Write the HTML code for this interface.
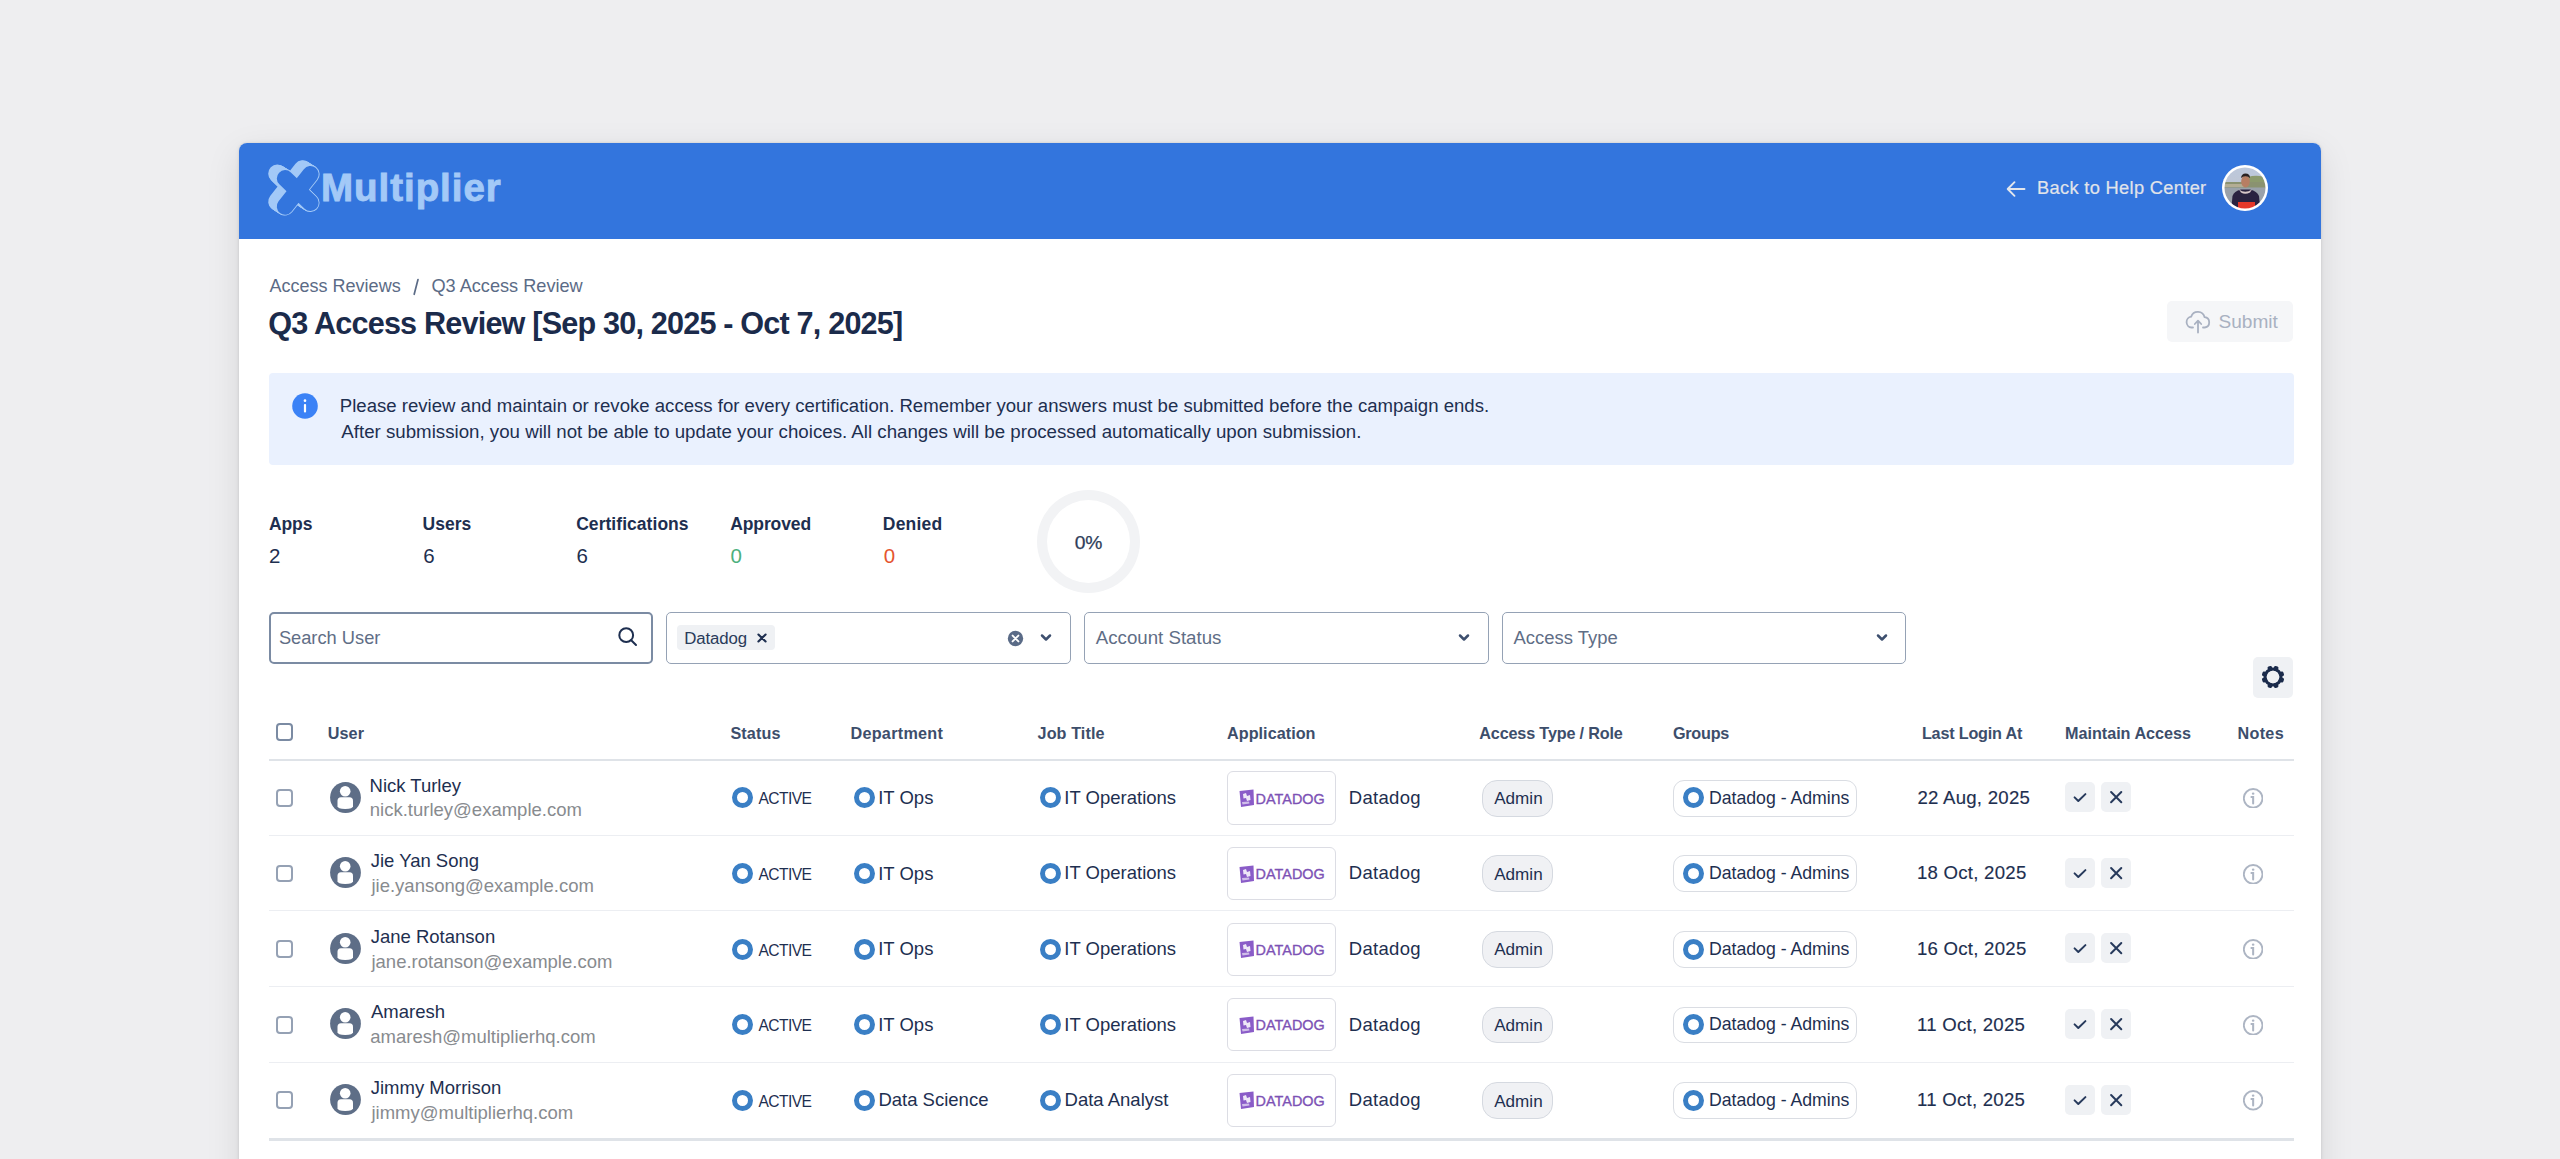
<!DOCTYPE html>
<html><head><meta charset="utf-8"><style>
html,body{margin:0;padding:0;}
body{width:2560px;height:1159px;overflow:hidden;background:#eeeef0;position:relative;font-family:"Liberation Sans",sans-serif;}
.t{position:absolute;white-space:nowrap;line-height:1;}
.r{position:absolute;}
</style></head><body>
<div class="r" style="left:239.00px;top:143.00px;width:2082.00px;height:1257.00px;background:#fff;border-radius:8px;box-shadow:0 0 2px rgba(0,0,0,0.10),0 0 5px rgba(0,0,0,0.06),0 10px 34px rgba(0,0,0,0.10);"></div>
<div class="r" style="left:239.00px;top:143.00px;width:2082.00px;height:96.00px;background:#3375dd;border-radius:8px 8px 0 0;"></div>
<svg class="r" style="left:262.00px;top:155.00px;width:64.00px;height:64.00px;" viewBox="0 0 64 64"><g transform="translate(-7.70,-4.80)"><path d="M23.1 23.4 L48.4 47.8 M48.4 19.3 L23.1 51.4" stroke="#a3c9f7" stroke-width="18.4" stroke-linecap="round" fill="none"/></g><g transform="translate(-6.93,-4.32)"><path d="M23.1 23.4 L48.4 47.8 M48.4 19.3 L23.1 51.4" stroke="#a3c9f7" stroke-width="18.4" stroke-linecap="round" fill="none"/></g><g transform="translate(-6.16,-3.84)"><path d="M23.1 23.4 L48.4 47.8 M48.4 19.3 L23.1 51.4" stroke="#a3c9f7" stroke-width="18.4" stroke-linecap="round" fill="none"/></g><g transform="translate(-5.39,-3.36)"><path d="M23.1 23.4 L48.4 47.8 M48.4 19.3 L23.1 51.4" stroke="#a3c9f7" stroke-width="18.4" stroke-linecap="round" fill="none"/></g><g transform="translate(-4.62,-2.88)"><path d="M23.1 23.4 L48.4 47.8 M48.4 19.3 L23.1 51.4" stroke="#a3c9f7" stroke-width="18.4" stroke-linecap="round" fill="none"/></g><g transform="translate(-3.85,-2.40)"><path d="M23.1 23.4 L48.4 47.8 M48.4 19.3 L23.1 51.4" stroke="#a3c9f7" stroke-width="18.4" stroke-linecap="round" fill="none"/></g><g transform="translate(-3.08,-1.92)"><path d="M23.1 23.4 L48.4 47.8 M48.4 19.3 L23.1 51.4" stroke="#a3c9f7" stroke-width="18.4" stroke-linecap="round" fill="none"/></g><g transform="translate(-2.31,-1.44)"><path d="M23.1 23.4 L48.4 47.8 M48.4 19.3 L23.1 51.4" stroke="#a3c9f7" stroke-width="18.4" stroke-linecap="round" fill="none"/></g><g transform="translate(-1.54,-0.96)"><path d="M23.1 23.4 L48.4 47.8 M48.4 19.3 L23.1 51.4" stroke="#a3c9f7" stroke-width="18.4" stroke-linecap="round" fill="none"/></g><g transform="translate(-0.77,-0.48)"><path d="M23.1 23.4 L48.4 47.8 M48.4 19.3 L23.1 51.4" stroke="#a3c9f7" stroke-width="18.4" stroke-linecap="round" fill="none"/></g><g transform="translate(-0.00,-0.00)"><path d="M23.1 23.4 L48.4 47.8 M48.4 19.3 L23.1 51.4" stroke="#a3c9f7" stroke-width="18.4" stroke-linecap="round" fill="none"/></g><path d="M23.1 23.4 L48.4 47.8 M48.4 19.3 L23.1 51.4" stroke="#3375dd" stroke-width="16.6" stroke-linecap="round" fill="none"/></svg>
<div class="t" style="left:321.10px;top:168.50px;font-size:38.50px;font-weight:bold;color:#a3c9f7;letter-spacing:0.950px;-webkit-text-stroke:0.9px #a3c9f7;">Multiplier</div>
<svg class="r" style="left:2005.00px;top:179.00px;width:22.00px;height:20.00px;" viewBox="0 0 22 20"><path d="M19.5 10 H3 M9.5 3.2 L2.7 10 L9.5 16.8" stroke="#e3e6ec" stroke-width="1.9" fill="none" stroke-linecap="round" stroke-linejoin="round"/></svg>
<div class="t" style="left:2037.04px;top:179.35px;font-size:18.25px;color:#e1e4ea;letter-spacing:0.324px;-webkit-text-stroke:0.2px #e1e4ea;">Back to Help Center</div>
<svg class="r" style="left:2222.00px;top:165.00px;width:46.00px;height:46.00px;" viewBox="0 0 46 46"><defs><clipPath id="avc"><circle cx="23" cy="23" r="20.5"/></clipPath>
<linearGradient id="sky" x1="0" y1="0" x2="0" y2="1"><stop offset="0" stop-color="#bcc8dc"/><stop offset="1" stop-color="#c2c4cc"/></linearGradient>
<filter id="bl" x="-10%" y="-10%" width="120%" height="120%"><feGaussianBlur stdDeviation="0.7"/></filter></defs>
<circle cx="23" cy="23" r="23" fill="#fff"/>
<g clip-path="url(#avc)"><g filter="url(#bl)">
<rect x="0" y="0" width="46" height="46" fill="url(#sky)"/>
<path d="M26 12 Q32 10 38 11 L46 13 L46 24 L26 24 Z" fill="#8c9a6c"/>
<rect x="0" y="17" width="46" height="6" fill="#8a9270"/>
<rect x="0" y="19" width="22" height="3" fill="#b3ad94"/>
<rect x="0" y="22.5" width="46" height="24" fill="#9aa1a9"/>
<path d="M9 46 L10.5 31 Q12 26 19 24.5 L28 24.5 Q35 26 37 31 L38.5 46 Z" fill="#2c2340"/>
<path d="M17 24.5 Q23 29 30 24.5 L28 27.5 Q23 30 19 27.5 Z" fill="#d8c6c8"/>
<rect x="16" y="37" width="17" height="10" fill="#e4372a"/>
<ellipse cx="23.5" cy="16.5" rx="4.3" ry="6" fill="#b77e64"/>
<path d="M19 13 Q19.5 8.5 23.5 8.5 Q28 8.5 28 13 Q26 11 23.5 11.2 Q21 11 19 13 Z" fill="#2a2320"/>
</g></g></svg>
<div class="t" style="left:269.60px;top:277.25px;font-size:18.01px;color:#5b6b86;">Access Reviews</div>
<svg class="r" style="left:410.00px;top:276.00px;width:12.00px;height:22.00px;" viewBox="0 0 12 22"><path d="M8 3.5 L4.2 18.3" stroke="#5b6b86" stroke-width="1.7" stroke-linecap="round"/></svg>
<div class="t" style="left:431.38px;top:277.12px;font-size:18.17px;color:#5b6b86;">Q3 Access Review</div>
<div class="t" style="left:268.28px;top:307.78px;font-size:30.62px;font-weight:bold;color:#1b2b4b;letter-spacing:-0.819px;">Q3 Access Review [Sep 30, 2025 - Oct 7, 2025]</div>
<div class="r" style="left:2167.20px;top:300.60px;width:126.20px;height:41.30px;background:#f5f6f8;border-radius:5px;"></div>
<svg class="r" style="left:2184.00px;top:308.00px;width:28.00px;height:26.00px;" viewBox="0 0 28 26"><path d="M9 19.5 H7.5 A5.5 5.5 0 0 1 7.2 8.6 A7 7 0 0 1 20.6 9.2 A5.2 5.2 0 0 1 20.8 19.5 H19" stroke="#a9b1c1" stroke-width="1.8" fill="none" stroke-linecap="round" stroke-linejoin="round"/><path d="M14 24.5 V13 M10.8 16 L14 12.6 L17.2 16" stroke="#a9b1c1" stroke-width="1.8" fill="none" stroke-linecap="round" stroke-linejoin="round"/></svg>
<div class="t" style="left:2218.54px;top:312.24px;font-size:19.08px;color:#a9b1c1;">Submit</div>
<div class="r" style="left:269.00px;top:373.00px;width:2024.50px;height:91.50px;background:#eaf1fe;border-radius:4px;"></div>
<svg class="r" style="left:292.00px;top:393.00px;width:26.00px;height:26.00px;" viewBox="0 0 26 26"><circle cx="13" cy="13" r="12.8" fill="#3b82f6"/><rect x="11.9" y="11" width="2.2" height="8.4" rx="1" fill="#fff"/><circle cx="13" cy="7.7" r="1.35" fill="#fff"/></svg>
<div class="t" style="left:339.81px;top:397.16px;font-size:18.59px;color:#1e2f50;">Please review and maintain or revoke access for every certification. Remember your answers must be submitted before the campaign ends.</div>
<div class="t" style="left:341.30px;top:422.58px;font-size:18.69px;color:#1e2f50;">After submission, you will not be able to update your choices. All changes will be processed automatically upon submission.</div>
<div class="t" style="left:268.96px;top:515.88px;font-size:17.50px;font-weight:bold;color:#1e2f50;letter-spacing:-0.104px;">Apps</div>
<div class="t" style="left:268.98px;top:545.94px;font-size:20.50px;color:#1e2f50;">2</div>
<div class="t" style="left:422.55px;top:515.88px;font-size:17.50px;font-weight:bold;color:#1e2f50;letter-spacing:0.025px;">Users</div>
<div class="t" style="left:423.18px;top:545.94px;font-size:20.50px;color:#1e2f50;">6</div>
<div class="t" style="left:576.20px;top:515.88px;font-size:17.50px;font-weight:bold;color:#1e2f50;letter-spacing:0.044px;">Certifications</div>
<div class="t" style="left:576.48px;top:545.94px;font-size:20.50px;color:#1e2f50;">6</div>
<div class="t" style="left:730.16px;top:515.88px;font-size:17.50px;font-weight:bold;color:#1e2f50;letter-spacing:-0.095px;">Approved</div>
<div class="t" style="left:730.38px;top:545.94px;font-size:20.50px;color:#4cb07d;">0</div>
<div class="t" style="left:882.86px;top:515.88px;font-size:17.50px;font-weight:bold;color:#1e2f50;letter-spacing:0.183px;">Denied</div>
<div class="t" style="left:883.78px;top:545.94px;font-size:20.50px;color:#e5552f;">0</div>
<div class="r" style="left:1037.10px;top:489.80px;width:103.00px;height:103.10px;border-radius:50%;border:10.3px solid #f2f3f5;box-sizing:border-box;"></div>
<div class="t" style="left:1074.63px;top:532.58px;font-size:19.27px;color:#2e3d5a;-webkit-text-stroke:0.25px #2e3d5a;">0%</div>
<div class="r" style="left:269.00px;top:612.00px;width:383.50px;height:51.50px;border:2px solid #7b8ba3;border-radius:5px;box-sizing:border-box;"></div>
<div class="t" style="left:278.88px;top:629.33px;font-size:18.27px;color:#5f6e86;">Search User</div>
<svg class="r" style="left:615.00px;top:624.00px;width:25.00px;height:25.00px;" viewBox="0 0 25 25"><circle cx="11.2" cy="11.2" r="6.9" stroke="#1e2f50" stroke-width="2" fill="none"/><path d="M16.2 16.2 L21 21" stroke="#1e2f50" stroke-width="2" stroke-linecap="round"/></svg>
<div class="r" style="left:666.00px;top:612.00px;width:404.50px;height:51.50px;border:1.8px solid #95a2b5;border-radius:5px;box-sizing:border-box;"></div>
<div class="r" style="left:677.30px;top:625.00px;width:97.30px;height:25.40px;background:#eff1f4;border-radius:4px;"></div>
<div class="t" style="left:684.15px;top:630.75px;font-size:16.82px;color:#2a3b5a;letter-spacing:-0.110px;">Datadog</div>
<svg class="r" style="left:755.00px;top:632.00px;width:14.00px;height:12.00px;" viewBox="0 0 14 12"><path d="M3.4 2.5 L10.6 9.5 M10.6 2.5 L3.4 9.5" stroke="#1e2f50" stroke-width="2.1" stroke-linecap="round"/></svg>
<svg class="r" style="left:1007.00px;top:629.50px;width:17.00px;height:17.00px;" viewBox="0 0 17 17"><circle cx="8.5" cy="8.5" r="7.7" fill="#5a6b87"/><path d="M5.6 5.6 L11.4 11.4 M11.4 5.6 L5.6 11.4" stroke="#fff" stroke-width="1.9" stroke-linecap="round"/></svg>
<svg class="r" style="left:1040.00px;top:633.00px;width:12.00px;height:10.00px;" viewBox="0 0 12 10"><path d="M2 2.5 L6 6.5 L10 2.5" stroke="#3d4f6e" stroke-width="2.5" fill="none" stroke-linecap="round" stroke-linejoin="round"/></svg>
<div class="r" style="left:1083.50px;top:612.00px;width:405.20px;height:51.50px;border:1.8px solid #95a2b5;border-radius:5px;box-sizing:border-box;"></div>
<div class="t" style="left:1095.75px;top:628.95px;font-size:18.71px;color:#5f6e86;">Account Status</div>
<svg class="r" style="left:1458.40px;top:633.00px;width:12.00px;height:10.00px;" viewBox="0 0 12 10"><path d="M2 2.5 L6 6.5 L10 2.5" stroke="#3d4f6e" stroke-width="2.5" fill="none" stroke-linecap="round" stroke-linejoin="round"/></svg>
<div class="r" style="left:1501.80px;top:612.00px;width:404.20px;height:51.50px;border:1.8px solid #95a2b5;border-radius:5px;box-sizing:border-box;"></div>
<div class="t" style="left:1513.50px;top:629.17px;font-size:18.47px;color:#5f6e86;">Access Type</div>
<svg class="r" style="left:1876.00px;top:633.00px;width:12.00px;height:10.00px;" viewBox="0 0 12 10"><path d="M2 2.5 L6 6.5 L10 2.5" stroke="#3d4f6e" stroke-width="2.5" fill="none" stroke-linecap="round" stroke-linejoin="round"/></svg>
<div class="r" style="left:2252.80px;top:656.90px;width:40.30px;height:41.10px;background:#eff1f4;border-radius:5px;"></div>
<svg class="r" style="left:2260.80px;top:665.00px;width:24.00px;height:24.00px;" viewBox="0 0 24 24"><g transform="translate(12,12)"><rect x="-2.3" y="-11.3" width="4.6" height="5" rx="1.4" transform="rotate(-19)" fill="#1b2b4b"/><rect x="-2.3" y="-11.3" width="4.6" height="5" rx="1.4" transform="rotate(19)" fill="#1b2b4b"/><rect x="-2.3" y="-11.3" width="4.6" height="5" rx="1.4" transform="rotate(71)" fill="#1b2b4b"/><rect x="-2.3" y="-11.3" width="4.6" height="5" rx="1.4" transform="rotate(109)" fill="#1b2b4b"/><rect x="-2.3" y="-11.3" width="4.6" height="5" rx="1.4" transform="rotate(161)" fill="#1b2b4b"/><rect x="-2.3" y="-11.3" width="4.6" height="5" rx="1.4" transform="rotate(199)" fill="#1b2b4b"/><rect x="-2.3" y="-11.3" width="4.6" height="5" rx="1.4" transform="rotate(251)" fill="#1b2b4b"/><rect x="-2.3" y="-11.3" width="4.6" height="5" rx="1.4" transform="rotate(289)" fill="#1b2b4b"/><circle r="8" stroke="#1b2b4b" stroke-width="3" fill="none"/></g></svg>
<div class="r" style="left:275.80px;top:723.40px;width:17.30px;height:17.50px;border:2px solid #7b8ba3;border-radius:4px;box-sizing:border-box;"></div>
<div class="t" style="left:327.73px;top:725.18px;font-size:16.20px;font-weight:bold;color:#3d4e6b;letter-spacing:0.090px;">User</div>
<div class="t" style="left:730.41px;top:725.18px;font-size:16.20px;font-weight:bold;color:#3d4e6b;letter-spacing:0.109px;">Status</div>
<div class="t" style="left:850.45px;top:725.18px;font-size:16.20px;font-weight:bold;color:#3d4e6b;letter-spacing:0.280px;">Department</div>
<div class="t" style="left:1037.56px;top:725.18px;font-size:16.20px;font-weight:bold;color:#3d4e6b;letter-spacing:0.082px;">Job Title</div>
<div class="t" style="left:1227.00px;top:725.18px;font-size:16.20px;font-weight:bold;color:#3d4e6b;letter-spacing:0.037px;">Application</div>
<div class="t" style="left:1479.30px;top:725.18px;font-size:16.20px;font-weight:bold;color:#3d4e6b;letter-spacing:-0.163px;">Access Type / Role</div>
<div class="t" style="left:1672.95px;top:725.18px;font-size:16.20px;font-weight:bold;color:#3d4e6b;letter-spacing:-0.239px;">Groups</div>
<div class="t" style="left:1921.95px;top:725.18px;font-size:16.20px;font-weight:bold;color:#3d4e6b;letter-spacing:-0.205px;">Last Login At</div>
<div class="t" style="left:2064.95px;top:725.18px;font-size:16.20px;font-weight:bold;color:#3d4e6b;letter-spacing:-0.011px;">Maintain Access</div>
<div class="t" style="left:2237.45px;top:725.18px;font-size:16.20px;font-weight:bold;color:#3d4e6b;letter-spacing:0.312px;">Notes</div>
<div class="r" style="left:269.00px;top:758.50px;width:2024.70px;height:2.50px;background:#dfe3e8;"></div>
<div class="r" style="left:275.60px;top:788.90px;width:17.60px;height:17.90px;border:2.1px solid #95a1b4;border-radius:4px;box-sizing:border-box;"></div>
<svg class="r" style="left:330.30px;top:781.60px;width:31.00px;height:31.00px;" viewBox="0 0 31 31"><circle cx="15.5" cy="15.5" r="15.4" fill="#5e6e87"/><circle cx="15.2" cy="9.3" r="5.3" fill="#fff"/><path d="M11 15.3 H19.5 Q23 15.3 23 18.8 V24.3 Q23 26.8 15.2 27 Q7.5 26.8 7.5 24.3 V18.8 Q7.5 15.3 11 15.3 Z" fill="#fff"/></svg>
<div class="t" style="left:369.52px;top:776.54px;font-size:18.50px;color:#1e2f50;">Nick Turley</div>
<div class="t" style="left:369.80px;top:801.44px;font-size:18.50px;color:#888b8f;">nick.turley@example.com</div>
<div class="r" style="left:732.20px;top:787.30px;width:21.00px;height:21.00px;border-radius:50%;border:5.2px solid #3a7fc5;box-sizing:border-box;"></div>
<div class="t" style="left:758.50px;top:791.39px;font-size:15.60px;color:#1e2f50;letter-spacing:-0.578px;">ACTIVE</div>
<div class="r" style="left:853.50px;top:787.30px;width:21.00px;height:21.00px;border-radius:50%;border:5.2px solid #3a7fc5;box-sizing:border-box;"></div>
<div class="t" style="left:878.24px;top:788.94px;font-size:18.50px;color:#1e2f50;">IT Ops</div>
<div class="r" style="left:1039.50px;top:787.30px;width:21.00px;height:21.00px;border-radius:50%;border:5.2px solid #3a7fc5;box-sizing:border-box;"></div>
<div class="t" style="left:1064.34px;top:788.84px;font-size:18.50px;color:#1e2f50;">IT Operations</div>
<div class="r" style="left:1226.70px;top:771.40px;width:108.90px;height:53.20px;border:1.3px solid #dcdde4;border-radius:6px;box-sizing:border-box;"></div>
<svg class="r" style="left:1237.50px;top:788.00px;width:17.00px;height:20.00px;" viewBox="0 0 17 20"><path d="M1.5 3 L15.5 1.5 L16 17 L3 19 Z" fill="#8a5cc8"/><path d="M5 6 L8 5 L9 8 L12 7 L12.5 12 L9 13 L8 10 L5.5 10.5 Z" fill="#fff" opacity="0.85"/><path d="M4 14 L11 13.5 L11.5 15.5 L4.5 16.5 Z" fill="#fff" opacity="0.6"/></svg>
<div class="t" style="left:1255.45px;top:791.51px;font-size:14.40px;color:#7d52b5;letter-spacing:0.052px;-webkit-text-stroke:0.35px #7d52b5;">DATADOG</div>
<div class="t" style="left:1348.82px;top:788.84px;font-size:18.50px;color:#1e2f50;letter-spacing:0.292px;">Datadog</div>
<div class="r" style="left:1482.20px;top:779.70px;width:70.90px;height:36.90px;background:#f0f1f4;border:1.3px solid #d5d9e0;border-radius:15px;box-sizing:border-box;"></div>
<div class="t" style="left:1494.20px;top:790.12px;font-size:17.10px;color:#1e2f50;">Admin</div>
<div class="r" style="left:1673.00px;top:779.70px;width:184.20px;height:36.90px;background:#fff;border:1.3px solid #dadde3;border-radius:11px;box-sizing:border-box;"></div>
<div class="r" style="left:1683.10px;top:787.30px;width:21.00px;height:21.00px;border-radius:50%;border:5.2px solid #3a7fc5;box-sizing:border-box;"></div>
<div class="t" style="left:1708.88px;top:789.61px;font-size:17.70px;color:#1e2f50;">Datadog - Admins</div>
<div class="t" style="left:1917.47px;top:788.85px;font-size:18.60px;color:#1e2f50;letter-spacing:0.25px;-webkit-text-stroke:0.15px #1e2f50;">22 Aug, 2025</div>
<div class="r" style="left:2065.30px;top:782.20px;width:30.00px;height:30.00px;background:#eff1f4;border-radius:5px;"></div>
<svg class="r" style="left:2065.30px;top:782.20px;width:30.00px;height:30.00px;" viewBox="0 0 30 30"><path d="M9.6 15.4 L13.3 19 L20.4 12.1" stroke="#273a5c" stroke-width="2" fill="none" stroke-linecap="round" stroke-linejoin="round"/></svg>
<div class="r" style="left:2101.00px;top:782.20px;width:30.20px;height:30.00px;background:#eff1f4;border-radius:5px;"></div>
<svg class="r" style="left:2101.00px;top:782.20px;width:30.20px;height:30.00px;" viewBox="0 0 30 30"><path d="M10 10 L20.2 20.2 M20.2 10 L10 20.2" stroke="#273a5c" stroke-width="2" fill="none" stroke-linecap="round"/></svg>
<svg class="r" style="left:2243.00px;top:788.00px;width:20.30px;height:20.30px;top:788.00px;" viewBox="0 0 20 20"><circle cx="10" cy="10.2" r="9.2" stroke="#adb5c3" stroke-width="1.8" fill="none"/><ellipse cx="10" cy="5.6" rx="1.3" ry="1.1" fill="#adb5c3"/><path d="M8.3 8.9 H10 V15.3" stroke="#adb5c3" stroke-width="2" fill="none" stroke-linecap="round"/></svg>
<div class="r" style="left:269.00px;top:834.60px;width:2024.70px;height:1.20px;background:#eceef2;"></div>
<div class="r" style="left:275.60px;top:864.50px;width:17.60px;height:17.90px;border:2.1px solid #95a1b4;border-radius:4px;box-sizing:border-box;"></div>
<svg class="r" style="left:330.30px;top:857.20px;width:31.00px;height:31.00px;" viewBox="0 0 31 31"><circle cx="15.5" cy="15.5" r="15.4" fill="#5e6e87"/><circle cx="15.2" cy="9.3" r="5.3" fill="#fff"/><path d="M11 15.3 H19.5 Q23 15.3 23 18.8 V24.3 Q23 26.8 15.2 27 Q7.5 26.8 7.5 24.3 V18.8 Q7.5 15.3 11 15.3 Z" fill="#fff"/></svg>
<div class="t" style="left:370.72px;top:852.14px;font-size:18.50px;color:#1e2f50;">Jie Yan Song</div>
<div class="t" style="left:371.46px;top:877.04px;font-size:18.50px;color:#888b8f;">jie.yansong@example.com</div>
<div class="r" style="left:732.20px;top:862.90px;width:21.00px;height:21.00px;border-radius:50%;border:5.2px solid #3a7fc5;box-sizing:border-box;"></div>
<div class="t" style="left:758.50px;top:866.99px;font-size:15.60px;color:#1e2f50;letter-spacing:-0.578px;">ACTIVE</div>
<div class="r" style="left:853.50px;top:862.90px;width:21.00px;height:21.00px;border-radius:50%;border:5.2px solid #3a7fc5;box-sizing:border-box;"></div>
<div class="t" style="left:878.24px;top:864.54px;font-size:18.50px;color:#1e2f50;">IT Ops</div>
<div class="r" style="left:1039.50px;top:862.90px;width:21.00px;height:21.00px;border-radius:50%;border:5.2px solid #3a7fc5;box-sizing:border-box;"></div>
<div class="t" style="left:1064.34px;top:864.44px;font-size:18.50px;color:#1e2f50;">IT Operations</div>
<div class="r" style="left:1226.70px;top:847.00px;width:108.90px;height:53.20px;border:1.3px solid #dcdde4;border-radius:6px;box-sizing:border-box;"></div>
<svg class="r" style="left:1237.50px;top:863.60px;width:17.00px;height:20.00px;" viewBox="0 0 17 20"><path d="M1.5 3 L15.5 1.5 L16 17 L3 19 Z" fill="#8a5cc8"/><path d="M5 6 L8 5 L9 8 L12 7 L12.5 12 L9 13 L8 10 L5.5 10.5 Z" fill="#fff" opacity="0.85"/><path d="M4 14 L11 13.5 L11.5 15.5 L4.5 16.5 Z" fill="#fff" opacity="0.6"/></svg>
<div class="t" style="left:1255.45px;top:867.11px;font-size:14.40px;color:#7d52b5;letter-spacing:0.052px;-webkit-text-stroke:0.35px #7d52b5;">DATADOG</div>
<div class="t" style="left:1348.82px;top:864.44px;font-size:18.50px;color:#1e2f50;letter-spacing:0.292px;">Datadog</div>
<div class="r" style="left:1482.20px;top:855.30px;width:70.90px;height:36.90px;background:#f0f1f4;border:1.3px solid #d5d9e0;border-radius:15px;box-sizing:border-box;"></div>
<div class="t" style="left:1494.20px;top:865.72px;font-size:17.10px;color:#1e2f50;">Admin</div>
<div class="r" style="left:1673.00px;top:855.30px;width:184.20px;height:36.90px;background:#fff;border:1.3px solid #dadde3;border-radius:11px;box-sizing:border-box;"></div>
<div class="r" style="left:1683.10px;top:862.90px;width:21.00px;height:21.00px;border-radius:50%;border:5.2px solid #3a7fc5;box-sizing:border-box;"></div>
<div class="t" style="left:1708.88px;top:865.21px;font-size:17.70px;color:#1e2f50;">Datadog - Admins</div>
<div class="t" style="left:1917.01px;top:864.45px;font-size:18.60px;color:#1e2f50;letter-spacing:0.25px;-webkit-text-stroke:0.15px #1e2f50;">18 Oct, 2025</div>
<div class="r" style="left:2065.30px;top:857.80px;width:30.00px;height:30.00px;background:#eff1f4;border-radius:5px;"></div>
<svg class="r" style="left:2065.30px;top:857.80px;width:30.00px;height:30.00px;" viewBox="0 0 30 30"><path d="M9.6 15.4 L13.3 19 L20.4 12.1" stroke="#273a5c" stroke-width="2" fill="none" stroke-linecap="round" stroke-linejoin="round"/></svg>
<div class="r" style="left:2101.00px;top:857.80px;width:30.20px;height:30.00px;background:#eff1f4;border-radius:5px;"></div>
<svg class="r" style="left:2101.00px;top:857.80px;width:30.20px;height:30.00px;" viewBox="0 0 30 30"><path d="M10 10 L20.2 20.2 M20.2 10 L10 20.2" stroke="#273a5c" stroke-width="2" fill="none" stroke-linecap="round"/></svg>
<svg class="r" style="left:2243.00px;top:788.00px;width:20.30px;height:20.30px;top:863.60px;" viewBox="0 0 20 20"><circle cx="10" cy="10.2" r="9.2" stroke="#adb5c3" stroke-width="1.8" fill="none"/><ellipse cx="10" cy="5.6" rx="1.3" ry="1.1" fill="#adb5c3"/><path d="M8.3 8.9 H10 V15.3" stroke="#adb5c3" stroke-width="2" fill="none" stroke-linecap="round"/></svg>
<div class="r" style="left:269.00px;top:910.30px;width:2024.70px;height:1.20px;background:#eceef2;"></div>
<div class="r" style="left:275.60px;top:940.10px;width:17.60px;height:17.90px;border:2.1px solid #95a1b4;border-radius:4px;box-sizing:border-box;"></div>
<svg class="r" style="left:330.30px;top:932.80px;width:31.00px;height:31.00px;" viewBox="0 0 31 31"><circle cx="15.5" cy="15.5" r="15.4" fill="#5e6e87"/><circle cx="15.2" cy="9.3" r="5.3" fill="#fff"/><path d="M11 15.3 H19.5 Q23 15.3 23 18.8 V24.3 Q23 26.8 15.2 27 Q7.5 26.8 7.5 24.3 V18.8 Q7.5 15.3 11 15.3 Z" fill="#fff"/></svg>
<div class="t" style="left:370.72px;top:927.74px;font-size:18.50px;color:#1e2f50;">Jane Rotanson</div>
<div class="t" style="left:371.46px;top:952.64px;font-size:18.50px;color:#888b8f;">jane.rotanson@example.com</div>
<div class="r" style="left:732.20px;top:938.50px;width:21.00px;height:21.00px;border-radius:50%;border:5.2px solid #3a7fc5;box-sizing:border-box;"></div>
<div class="t" style="left:758.50px;top:942.59px;font-size:15.60px;color:#1e2f50;letter-spacing:-0.578px;">ACTIVE</div>
<div class="r" style="left:853.50px;top:938.50px;width:21.00px;height:21.00px;border-radius:50%;border:5.2px solid #3a7fc5;box-sizing:border-box;"></div>
<div class="t" style="left:878.24px;top:940.14px;font-size:18.50px;color:#1e2f50;">IT Ops</div>
<div class="r" style="left:1039.50px;top:938.50px;width:21.00px;height:21.00px;border-radius:50%;border:5.2px solid #3a7fc5;box-sizing:border-box;"></div>
<div class="t" style="left:1064.34px;top:940.04px;font-size:18.50px;color:#1e2f50;">IT Operations</div>
<div class="r" style="left:1226.70px;top:922.60px;width:108.90px;height:53.20px;border:1.3px solid #dcdde4;border-radius:6px;box-sizing:border-box;"></div>
<svg class="r" style="left:1237.50px;top:939.20px;width:17.00px;height:20.00px;" viewBox="0 0 17 20"><path d="M1.5 3 L15.5 1.5 L16 17 L3 19 Z" fill="#8a5cc8"/><path d="M5 6 L8 5 L9 8 L12 7 L12.5 12 L9 13 L8 10 L5.5 10.5 Z" fill="#fff" opacity="0.85"/><path d="M4 14 L11 13.5 L11.5 15.5 L4.5 16.5 Z" fill="#fff" opacity="0.6"/></svg>
<div class="t" style="left:1255.45px;top:942.71px;font-size:14.40px;color:#7d52b5;letter-spacing:0.052px;-webkit-text-stroke:0.35px #7d52b5;">DATADOG</div>
<div class="t" style="left:1348.82px;top:940.04px;font-size:18.50px;color:#1e2f50;letter-spacing:0.292px;">Datadog</div>
<div class="r" style="left:1482.20px;top:930.90px;width:70.90px;height:36.90px;background:#f0f1f4;border:1.3px solid #d5d9e0;border-radius:15px;box-sizing:border-box;"></div>
<div class="t" style="left:1494.20px;top:941.32px;font-size:17.10px;color:#1e2f50;">Admin</div>
<div class="r" style="left:1673.00px;top:930.90px;width:184.20px;height:36.90px;background:#fff;border:1.3px solid #dadde3;border-radius:11px;box-sizing:border-box;"></div>
<div class="r" style="left:1683.10px;top:938.50px;width:21.00px;height:21.00px;border-radius:50%;border:5.2px solid #3a7fc5;box-sizing:border-box;"></div>
<div class="t" style="left:1708.88px;top:940.81px;font-size:17.70px;color:#1e2f50;">Datadog - Admins</div>
<div class="t" style="left:1917.01px;top:940.05px;font-size:18.60px;color:#1e2f50;letter-spacing:0.25px;-webkit-text-stroke:0.15px #1e2f50;">16 Oct, 2025</div>
<div class="r" style="left:2065.30px;top:933.40px;width:30.00px;height:30.00px;background:#eff1f4;border-radius:5px;"></div>
<svg class="r" style="left:2065.30px;top:933.40px;width:30.00px;height:30.00px;" viewBox="0 0 30 30"><path d="M9.6 15.4 L13.3 19 L20.4 12.1" stroke="#273a5c" stroke-width="2" fill="none" stroke-linecap="round" stroke-linejoin="round"/></svg>
<div class="r" style="left:2101.00px;top:933.40px;width:30.20px;height:30.00px;background:#eff1f4;border-radius:5px;"></div>
<svg class="r" style="left:2101.00px;top:933.40px;width:30.20px;height:30.00px;" viewBox="0 0 30 30"><path d="M10 10 L20.2 20.2 M20.2 10 L10 20.2" stroke="#273a5c" stroke-width="2" fill="none" stroke-linecap="round"/></svg>
<svg class="r" style="left:2243.00px;top:788.00px;width:20.30px;height:20.30px;top:939.20px;" viewBox="0 0 20 20"><circle cx="10" cy="10.2" r="9.2" stroke="#adb5c3" stroke-width="1.8" fill="none"/><ellipse cx="10" cy="5.6" rx="1.3" ry="1.1" fill="#adb5c3"/><path d="M8.3 8.9 H10 V15.3" stroke="#adb5c3" stroke-width="2" fill="none" stroke-linecap="round"/></svg>
<div class="r" style="left:269.00px;top:985.80px;width:2024.70px;height:1.20px;background:#eceef2;"></div>
<div class="r" style="left:275.60px;top:1015.70px;width:17.60px;height:17.90px;border:2.1px solid #95a1b4;border-radius:4px;box-sizing:border-box;"></div>
<svg class="r" style="left:330.30px;top:1008.40px;width:31.00px;height:31.00px;" viewBox="0 0 31 31"><circle cx="15.5" cy="15.5" r="15.4" fill="#5e6e87"/><circle cx="15.2" cy="9.3" r="5.3" fill="#fff"/><path d="M11 15.3 H19.5 Q23 15.3 23 18.8 V24.3 Q23 26.8 15.2 27 Q7.5 26.8 7.5 24.3 V18.8 Q7.5 15.3 11 15.3 Z" fill="#fff"/></svg>
<div class="t" style="left:371.00px;top:1003.34px;font-size:18.50px;color:#1e2f50;">Amaresh</div>
<div class="t" style="left:370.26px;top:1028.24px;font-size:18.50px;color:#888b8f;">amaresh@multiplierhq.com</div>
<div class="r" style="left:732.20px;top:1014.10px;width:21.00px;height:21.00px;border-radius:50%;border:5.2px solid #3a7fc5;box-sizing:border-box;"></div>
<div class="t" style="left:758.50px;top:1018.19px;font-size:15.60px;color:#1e2f50;letter-spacing:-0.578px;">ACTIVE</div>
<div class="r" style="left:853.50px;top:1014.10px;width:21.00px;height:21.00px;border-radius:50%;border:5.2px solid #3a7fc5;box-sizing:border-box;"></div>
<div class="t" style="left:878.24px;top:1015.74px;font-size:18.50px;color:#1e2f50;">IT Ops</div>
<div class="r" style="left:1039.50px;top:1014.10px;width:21.00px;height:21.00px;border-radius:50%;border:5.2px solid #3a7fc5;box-sizing:border-box;"></div>
<div class="t" style="left:1064.34px;top:1015.64px;font-size:18.50px;color:#1e2f50;">IT Operations</div>
<div class="r" style="left:1226.70px;top:998.20px;width:108.90px;height:53.20px;border:1.3px solid #dcdde4;border-radius:6px;box-sizing:border-box;"></div>
<svg class="r" style="left:1237.50px;top:1014.80px;width:17.00px;height:20.00px;" viewBox="0 0 17 20"><path d="M1.5 3 L15.5 1.5 L16 17 L3 19 Z" fill="#8a5cc8"/><path d="M5 6 L8 5 L9 8 L12 7 L12.5 12 L9 13 L8 10 L5.5 10.5 Z" fill="#fff" opacity="0.85"/><path d="M4 14 L11 13.5 L11.5 15.5 L4.5 16.5 Z" fill="#fff" opacity="0.6"/></svg>
<div class="t" style="left:1255.45px;top:1018.31px;font-size:14.40px;color:#7d52b5;letter-spacing:0.052px;-webkit-text-stroke:0.35px #7d52b5;">DATADOG</div>
<div class="t" style="left:1348.82px;top:1015.64px;font-size:18.50px;color:#1e2f50;letter-spacing:0.292px;">Datadog</div>
<div class="r" style="left:1482.20px;top:1006.50px;width:70.90px;height:36.90px;background:#f0f1f4;border:1.3px solid #d5d9e0;border-radius:15px;box-sizing:border-box;"></div>
<div class="t" style="left:1494.20px;top:1016.92px;font-size:17.10px;color:#1e2f50;">Admin</div>
<div class="r" style="left:1673.00px;top:1006.50px;width:184.20px;height:36.90px;background:#fff;border:1.3px solid #dadde3;border-radius:11px;box-sizing:border-box;"></div>
<div class="r" style="left:1683.10px;top:1014.10px;width:21.00px;height:21.00px;border-radius:50%;border:5.2px solid #3a7fc5;box-sizing:border-box;"></div>
<div class="t" style="left:1708.88px;top:1016.41px;font-size:17.70px;color:#1e2f50;">Datadog - Admins</div>
<div class="t" style="left:1917.01px;top:1015.65px;font-size:18.60px;color:#1e2f50;letter-spacing:0.25px;-webkit-text-stroke:0.15px #1e2f50;">11 Oct, 2025</div>
<div class="r" style="left:2065.30px;top:1009.00px;width:30.00px;height:30.00px;background:#eff1f4;border-radius:5px;"></div>
<svg class="r" style="left:2065.30px;top:1009.00px;width:30.00px;height:30.00px;" viewBox="0 0 30 30"><path d="M9.6 15.4 L13.3 19 L20.4 12.1" stroke="#273a5c" stroke-width="2" fill="none" stroke-linecap="round" stroke-linejoin="round"/></svg>
<div class="r" style="left:2101.00px;top:1009.00px;width:30.20px;height:30.00px;background:#eff1f4;border-radius:5px;"></div>
<svg class="r" style="left:2101.00px;top:1009.00px;width:30.20px;height:30.00px;" viewBox="0 0 30 30"><path d="M10 10 L20.2 20.2 M20.2 10 L10 20.2" stroke="#273a5c" stroke-width="2" fill="none" stroke-linecap="round"/></svg>
<svg class="r" style="left:2243.00px;top:788.00px;width:20.30px;height:20.30px;top:1014.80px;" viewBox="0 0 20 20"><circle cx="10" cy="10.2" r="9.2" stroke="#adb5c3" stroke-width="1.8" fill="none"/><ellipse cx="10" cy="5.6" rx="1.3" ry="1.1" fill="#adb5c3"/><path d="M8.3 8.9 H10 V15.3" stroke="#adb5c3" stroke-width="2" fill="none" stroke-linecap="round"/></svg>
<div class="r" style="left:269.00px;top:1061.60px;width:2024.70px;height:1.20px;background:#eceef2;"></div>
<div class="r" style="left:275.60px;top:1091.30px;width:17.60px;height:17.90px;border:2.1px solid #95a1b4;border-radius:4px;box-sizing:border-box;"></div>
<svg class="r" style="left:330.30px;top:1084.00px;width:31.00px;height:31.00px;" viewBox="0 0 31 31"><circle cx="15.5" cy="15.5" r="15.4" fill="#5e6e87"/><circle cx="15.2" cy="9.3" r="5.3" fill="#fff"/><path d="M11 15.3 H19.5 Q23 15.3 23 18.8 V24.3 Q23 26.8 15.2 27 Q7.5 26.8 7.5 24.3 V18.8 Q7.5 15.3 11 15.3 Z" fill="#fff"/></svg>
<div class="t" style="left:370.72px;top:1078.94px;font-size:18.50px;color:#1e2f50;">Jimmy Morrison</div>
<div class="t" style="left:371.46px;top:1103.84px;font-size:18.50px;color:#888b8f;">jimmy@multiplierhq.com</div>
<div class="r" style="left:732.20px;top:1089.70px;width:21.00px;height:21.00px;border-radius:50%;border:5.2px solid #3a7fc5;box-sizing:border-box;"></div>
<div class="t" style="left:758.50px;top:1093.79px;font-size:15.60px;color:#1e2f50;letter-spacing:-0.578px;">ACTIVE</div>
<div class="r" style="left:853.50px;top:1089.70px;width:21.00px;height:21.00px;border-radius:50%;border:5.2px solid #3a7fc5;box-sizing:border-box;"></div>
<div class="t" style="left:878.42px;top:1091.34px;font-size:18.50px;color:#1e2f50;">Data Science</div>
<div class="r" style="left:1039.50px;top:1089.70px;width:21.00px;height:21.00px;border-radius:50%;border:5.2px solid #3a7fc5;box-sizing:border-box;"></div>
<div class="t" style="left:1064.52px;top:1091.24px;font-size:18.50px;color:#1e2f50;">Data Analyst</div>
<div class="r" style="left:1226.70px;top:1073.80px;width:108.90px;height:53.20px;border:1.3px solid #dcdde4;border-radius:6px;box-sizing:border-box;"></div>
<svg class="r" style="left:1237.50px;top:1090.40px;width:17.00px;height:20.00px;" viewBox="0 0 17 20"><path d="M1.5 3 L15.5 1.5 L16 17 L3 19 Z" fill="#8a5cc8"/><path d="M5 6 L8 5 L9 8 L12 7 L12.5 12 L9 13 L8 10 L5.5 10.5 Z" fill="#fff" opacity="0.85"/><path d="M4 14 L11 13.5 L11.5 15.5 L4.5 16.5 Z" fill="#fff" opacity="0.6"/></svg>
<div class="t" style="left:1255.45px;top:1093.91px;font-size:14.40px;color:#7d52b5;letter-spacing:0.052px;-webkit-text-stroke:0.35px #7d52b5;">DATADOG</div>
<div class="t" style="left:1348.82px;top:1091.24px;font-size:18.50px;color:#1e2f50;letter-spacing:0.292px;">Datadog</div>
<div class="r" style="left:1482.20px;top:1082.10px;width:70.90px;height:36.90px;background:#f0f1f4;border:1.3px solid #d5d9e0;border-radius:15px;box-sizing:border-box;"></div>
<div class="t" style="left:1494.20px;top:1092.52px;font-size:17.10px;color:#1e2f50;">Admin</div>
<div class="r" style="left:1673.00px;top:1082.10px;width:184.20px;height:36.90px;background:#fff;border:1.3px solid #dadde3;border-radius:11px;box-sizing:border-box;"></div>
<div class="r" style="left:1683.10px;top:1089.70px;width:21.00px;height:21.00px;border-radius:50%;border:5.2px solid #3a7fc5;box-sizing:border-box;"></div>
<div class="t" style="left:1708.88px;top:1092.01px;font-size:17.70px;color:#1e2f50;">Datadog - Admins</div>
<div class="t" style="left:1917.01px;top:1091.25px;font-size:18.60px;color:#1e2f50;letter-spacing:0.25px;-webkit-text-stroke:0.15px #1e2f50;">11 Oct, 2025</div>
<div class="r" style="left:2065.30px;top:1084.60px;width:30.00px;height:30.00px;background:#eff1f4;border-radius:5px;"></div>
<svg class="r" style="left:2065.30px;top:1084.60px;width:30.00px;height:30.00px;" viewBox="0 0 30 30"><path d="M9.6 15.4 L13.3 19 L20.4 12.1" stroke="#273a5c" stroke-width="2" fill="none" stroke-linecap="round" stroke-linejoin="round"/></svg>
<div class="r" style="left:2101.00px;top:1084.60px;width:30.20px;height:30.00px;background:#eff1f4;border-radius:5px;"></div>
<svg class="r" style="left:2101.00px;top:1084.60px;width:30.20px;height:30.00px;" viewBox="0 0 30 30"><path d="M10 10 L20.2 20.2 M20.2 10 L10 20.2" stroke="#273a5c" stroke-width="2" fill="none" stroke-linecap="round"/></svg>
<svg class="r" style="left:2243.00px;top:788.00px;width:20.30px;height:20.30px;top:1090.40px;" viewBox="0 0 20 20"><circle cx="10" cy="10.2" r="9.2" stroke="#adb5c3" stroke-width="1.8" fill="none"/><ellipse cx="10" cy="5.6" rx="1.3" ry="1.1" fill="#adb5c3"/><path d="M8.3 8.9 H10 V15.3" stroke="#adb5c3" stroke-width="2" fill="none" stroke-linecap="round"/></svg>
<div class="r" style="left:269.00px;top:1138.20px;width:2024.70px;height:2.50px;background:#dfe3e8;"></div>
</body></html>
